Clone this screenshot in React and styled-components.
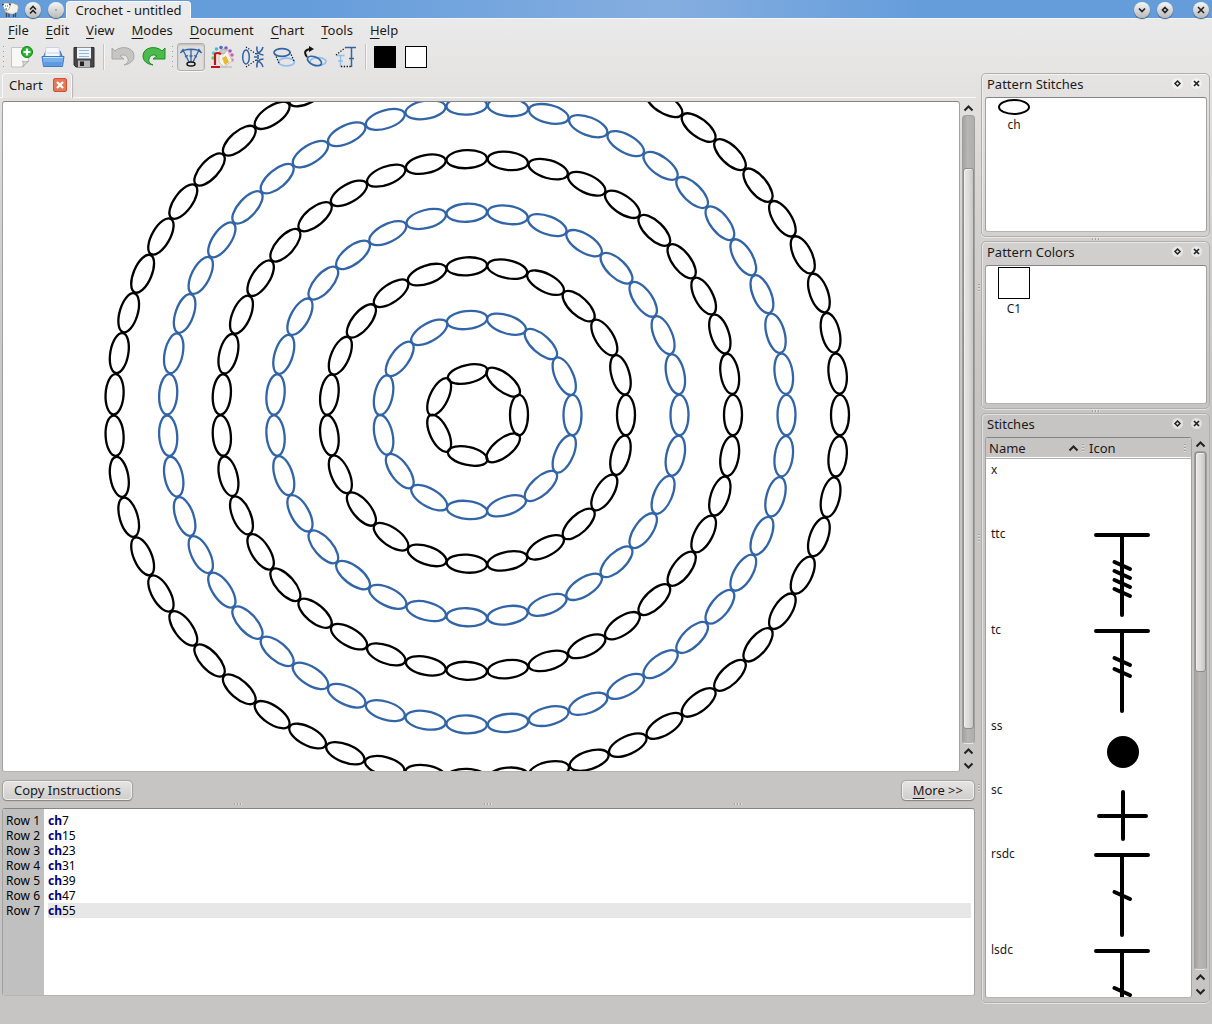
import React from "react";
import styled, { createGlobalStyle, css } from "styled-components";

const GlobalStyle = createGlobalStyle`
  * { box-sizing: border-box; }
  body {
    margin: 0;
    font-family: "Noto Sans", "Open Sans", sans-serif;
    font-size: 13px;
    line-height: 18px;
    color: #1c1a19;
  }
  button { font: inherit; color: inherit; border: 0; padding: 0; background: none; }
`;

const Window = styled.div`
  display: flex;
  flex-direction: column;
  height: 100vh;
  overflow: hidden;
  background: #c6c5c4 linear-gradient(#ebeaea 19px, #e2e1e0 100px, #d2d1d0 230px, #c6c5c4 400px);
`;

/* Title bar */
const TitleBar = styled.header`
  display: flex;
  align-items: center;
  flex: none;
  height: 19px;
  padding: 0 3px 0 2px;
  background: linear-gradient(90deg, #659ddb 25%, #85aee0 55%, #659ddb 76%);
  box-shadow: inset 0 -1px #f4f7fa;
`;

const TitleTab = styled.h1`
  align-self: flex-end;
  margin: 0 auto 0 2px;
  height: 18px;
  width: 125px;
  text-align: center;
  font-size: 13px;
  font-weight: 400;
  line-height: 16px;
  background: #ebebeb;
  border: 1px solid #fafafa;
  border-bottom: 0;
  border-radius: 4px 4px 0 0;
`;

const RoundButton = styled.button`
  width: 16px;
  height: 16px;
  flex: none;
  margin-left: ${(p) => p.$gap || 0}px;
  border-radius: 50%;
  background: linear-gradient(#f6f6f6, #b9b9b9);
  box-shadow: 0 1px 1px #35567e;
  svg { display: block; }
`;

/* Menus and tool bar */
const MenuBar = styled.nav`
  display: flex;
  flex: none;
  gap: 1px;
  height: 22px;
  padding-top: 2px;
  align-items: flex-start;
`;

const MenuButton = styled.button`
  padding: 0 8px;
`;

const Mnemonic = styled.u`
  text-underline-offset: 3px;
`;

const ToolBar = styled.div`
  display: flex;
  flex: none;
  align-items: center;
  gap: 3px;
  height: 31px;
  padding-left: 2px;
`;

const Handle = styled.i`
  width: 4px;
  height: 26px;
  margin-right: -1px;
  background: radial-gradient(circle, #9b9a99 1px, transparent 1px) 0 0 / 3px 5px;
`;

const Separator = styled.i`
  width: 5px;
  height: 26px;
  background: linear-gradient(90deg, transparent 2px, #c4c3c2 2px 3px, #f6f6f6 3px 4px, transparent 4px);
`;

const ToolButton = styled.button`
  display: grid;
  place-items: center;
  width: 28px;
  height: 28px;
  border-radius: 3px;
  ${(p) =>
    p.$pressed &&
    css`
      background: #dfdedd;
      border: 1px solid #b0afae;
      box-shadow: inset 0 1px 2px #b8b7b6, 0 1px #f8f8f8;
    `}
`;

const Swatch = styled.span`
  width: 22px;
  height: 22px;
  border: 1px solid #000;
  background: ${(p) => p.$color};
`;

/* Work area */
const Body = styled.div`
  display: flex;
  flex: 1;
  min-height: 0;
  padding: 0 2px 21px 0;
`;

const Left = styled.main`
  display: flex;
  flex-direction: column;
  flex: 1;
  min-width: 0;
  padding-bottom: 7px;
`;

const Tabs = styled.div`
  display: flex;
  align-items: flex-end;
  flex: none;
  height: 26px;
  padding-left: 2px;
  border-bottom: 1px solid #fafafa;
`;

const Tab = styled.div`
  display: flex;
  align-items: center;
  gap: 10px;
  height: 25px;
  margin-bottom: -1px;
  padding: 0 4px 2px 6px;
  border: 1px solid #f8f8f8;
  border-bottom: 0;
  border-radius: 4px 4px 0 0;
  background: #e6e5e4;
  box-shadow: 1px 0 1px #b5b4b3;
`;

const CloseTab = styled.button`
  width: 14px;
  height: 14px;
  border: 1px solid #d5502f;
  border-radius: 2px;
  background: #e3795a;
  svg { display: block; }
`;

const ScrollPane = styled.div`
  display: flex;
  flex: 1;
  min-height: 0;
  gap: 2px;
  padding: ${(p) => p.$pad || "0"};
`;

const Frame = styled.div`
  flex: 1;
  min-width: 0;
  min-height: 0;
  overflow: hidden;
  background: #fff;
  border: 1px solid #a3a2a1;
  border-top-color: #858483;
  border-bottom-color: #b5b4b3;
  border-radius: 3px;
`;

const Canvas = styled.svg`
  display: block;
  width: 100%;
  height: 100%;
`;

const Bar = styled.div`
  display: flex;
  flex-direction: column;
  width: 13px;
  flex: none;
`;

const ArrowButton = styled.button`
  height: 14px;
  svg { display: block; }
`;

const Groove = styled.div`
  display: flex;
  flex-direction: column;
  flex: 1;
  min-height: 0;
  border: 1px solid #a09f9e;
  border-bottom-color: #e8e7e6;
  border-radius: 4px;
  background: linear-gradient(90deg, #a3a2a1, #b7b6b5 40%, #afaead);
`;

const Space = styled.i`
  flex: ${(p) => p.$grow};
`;

const Thumb = styled.div`
  flex: ${(p) => p.$grow};
  border: 1px solid #8e8d8c;
  border-radius: 3px;
  background: linear-gradient(90deg, #e6e5e4, #dddcdb 50%, #c6c5c4);
  box-shadow: inset 1px 1px #f0f0f0;
`;

const ButtonRow = styled.div`
  display: flex;
  justify-content: space-between;
  flex: none;
  padding: 9px 2px 0 3px;
`;

const PushButton = styled.button`
  height: 19px;
  padding: 0 10px;
  line-height: 17px;
  border: 1px solid #f0efee;
  border-radius: 4px;
  background: linear-gradient(#e5e4e3, #cfcecd);
  box-shadow: 0 1px 1px #888786, 0 0 1px 1px #a5a4a3;
`;

const Grips = styled.div`
  display: flex;
  flex: none;
  flex-direction: ${(p) => (p.$vertical ? "column" : "row")};
  align-items: center;
  justify-content: center;
  gap: 242px;
  ${(p) => (p.$vertical ? "width" : "height")}: ${(p) => p.$size}px;
`;

const Grip = styled.i`
  width: ${(p) => (p.$vertical ? 2 : 8)}px;
  height: ${(p) => (p.$vertical ? 8 : 2)}px;
  background: repeating-linear-gradient(
    ${(p) => (p.$vertical ? "180deg" : "90deg")},
    #a3a2a1 0 1px, #e0dfde 1px 2px, transparent 2px 3px
  );
`;

const Editor = styled.div`
  display: flex;
  flex: none;
  height: 188px;
  margin: 0 1px 0 2px;
  overflow: hidden;
  background: #fff;
  border: 1px solid #a3a2a1;
  border-top-color: #858483;
  border-bottom-color: #b5b4b3;
  border-radius: 3px;
  font-size: 12px;
  line-height: 15px;
  color: #000;
`;

const Gutter = styled.div`
  flex: none;
  width: 41px;
  padding: 4px 4px 0 0;
  text-align: right;
  white-space: nowrap;
  background: #c0c0c0;
`;

const Lines = styled.div`
  flex: 1;
  padding: 4px 3px 0 4px;
  outline: 0;
`;

const Line = styled.div`
  background: ${(p) => (p.$current ? "#e7e7e7" : "none")};
  b { color: #000080; }
`;

/* Docks */
const Docks = styled.aside`
  display: flex;
  flex-direction: column;
  flex: none;
  width: 229px;
  padding-top: 1px;
`;

const Dock = styled.section`
  display: flex;
  flex-direction: column;
  flex: ${(p) => p.$flex};
  min-height: 0;
  padding: 0 2px 4px 3px;
  border: 1px solid #b0afae;
  border-radius: 5px;
  box-shadow: inset 1px 1px rgba(255, 255, 255, 0.5), 0 1px rgba(255, 255, 255, 0.5);
`;

const DockHeader = styled.div`
  display: flex;
  align-items: center;
  flex: none;
  height: 23px;
  padding: 0 5px 4px 2px;
`;

const DockTitle = styled.h2`
  margin: 0 auto 0 0;
  font-size: 13px;
  font-weight: 400;
  line-height: 16px;
`;

const DockButton = styled.button`
  width: 11px;
  height: 11px;
  margin-left: 8px;
  border-radius: 50%;
  background: rgba(255, 255, 255, 0.5);
  svg { display: block; }
`;

const Item = styled.figure`
  display: flex;
  flex-direction: column;
  align-items: center;
  width: 32px;
  margin: 1px 0 0 12px;
  font-size: 12px;
  line-height: 19px;
`;

const ColorBox = styled.span`
  width: 32px;
  height: 32px;
  border: 1px solid #000;
  background: #fff;
`;

const Table = styled.table`
  width: 100%;
  border-collapse: collapse;
  table-layout: fixed;
  td, th { padding: 0; text-align: left; vertical-align: top; font-weight: 400; }
  th { background: #c6c5c4; height: 21px; padding-top: 1px; box-shadow: inset 0 -1px #b0afae, inset 0 -2px #fff; }
  th:first-child { width: 98px; }
  td:first-child { padding: 2px 0 0 5px; font-size: 12px; }
`;

const HeadCell = styled.div`
  display: flex;
  align-items: center;
  justify-content: space-between;
  padding: 0 ${(p) => (p.$sorted ? 0 : 5)}px 0 ${(p) => (p.$sorted ? 3 : 5)}px;
`;

const HeadEnd = styled.span`
  display: flex;
  align-items: center;
  gap: 2px;
`;

const StitchRow = styled.tr`
  height: ${(p) => p.$height}px;
  svg { display: block; }
`;

/* Drawings */
const stroke = { fill: "none", stroke: "#222", strokeWidth: 2 };

const Chevron = ({ up }) => (
  <svg width="13" height="14" {...stroke}>
    <path d={up ? "M2.500 9.500L6.500 5.500L10.500 9.500" : "M2.500 5.500L6.500 9.500L10.500 5.500"} />
  </svg>
);

const WindowGlyph = ({ d, width = 2 }) => (
  <svg width="16" height="16" {...stroke} strokeWidth={width}>
    <path d={d} />
  </svg>
);

const Sheep = () => (
  <svg width="17" height="17" viewBox="0 0 17 17">
    <path d="M4.500 11v5M7 11v5M11.500 11v5M13.500 11v5" stroke="#444" strokeWidth="1.300" />
    <path d="M3 6C3 4 5 3 7 4c1-2 4-3 6-1 3 0 4 3 3 5 0 3-1 4-3 4-2 2-5 1-7 0-3 0-4-3-3-6z" fill="#f3f1ec" stroke="#8e8c86" strokeWidth=".7" />
    <path d="M1 2h6l1 3-1 3-2 2-3-2-1-3z" fill="#fff" stroke="#888" strokeWidth=".6" />
    <path d="M0 4l2-1M7 3l2 1M3 5h.8M5 5h.8M3.500 8h1.500" stroke="#222" strokeWidth="1" />
  </svg>
);

const NewIcon = () => (
  <svg width="24" height="24" viewBox="0 0 24 24">
    <path d="M1.500 2.500h17V16l-6 6h-11z" fill="#f8f8f8" stroke="#c4c4c4" />
    <path d="M18.500 16l-6 6c1-2 1-4 0-6 2 1 4 1 6 0z" fill="#ddd" stroke="#999" strokeWidth=".7" />
    <circle cx="17" cy="7" r="5.500" fill="#2bb533" stroke="#0a8a10" />
    <path d="M17 3.500v7M13.500 7h7" stroke="#fff" strokeWidth="2.200" />
  </svg>
);

const OpenIcon = () => (
  <svg width="24" height="24" viewBox="0 0 24 24">
    <path d="M2 13L5 6h14l3 7z" fill="#4b87d4" stroke="#3c76bd" />
    <path d="M5 2.500h13l1 9H4z" fill="#f4f7fb" stroke="#b8c8dc" strokeWidth=".7" />
    <path d="M6 8h12" stroke="#c5d4e6" />
    <path d="M1 11.500h22l-1.500 10h-19z" fill="#79afea" stroke="#3d79c4" />
    <path d="M2 12.500h20" stroke="#c9e0fa" />
    <path d="M3 17h18l-1 4H3.500z" fill="#5e9ae2" />
  </svg>
);

const SaveIcon = () => (
  <svg width="24" height="24" viewBox="0 0 24 24">
    <path d="M2 2.500h20v19.500H4l-2-2z" fill="#47474a" stroke="#2c2c2e" />
    <path d="M5 2.500h14v11H5z" fill="#f0f5fa" />
    <path d="M7 5.500h10M7 8.500h10M7 11.500h10" stroke="#8fb6dc" />
    <path d="M6 15.500h12V22H6z" fill="#b8b8b8" />
    <path d="M8 16.500h4V21H8z" fill="#222" />
  </svg>
);

const ArrowIcon = ({ fill, edge, flip }) => (
  <svg width="24" height="24" viewBox="0 0 24 24">
    <path
      transform={flip ? "matrix(-1 0 0 1 24 0)" : undefined}
      d="M1 3l3 3c6-6 19-4 19 5 0 5-4 8-10 9 3-1 5-4 4-6-1-4-5-5-8-3l4 3H1z"
      fill={fill} stroke={edge} strokeLinejoin="round"
    />
  </svg>
);

const blue = "#3264a8";
const paleBlue = "#93bff0";

const StitchModeIcon = () => (
  <svg width="24" height="24" viewBox="0 0 24 24" fill="none" stroke={blue} strokeWidth="1.300">
    <path d="M1.500 8C5 3 19 3 22.500 8M1.500 8l3-4M22.500 8l-3-4M4.500 6L10 17M19.500 6L14 17M12 5v12M6 12l3-1.500M18 12l-3-1.500M10.500 11h3" />
    <ellipse cx="12" cy="19" rx="4" ry="2" stroke="#111" strokeWidth="1.500" />
  </svg>
);

const FillIcon = () => (
  <svg width="24" height="24" viewBox="0 0 24 24">
    <circle cx="3" cy="13" r="1.800" fill="#5bd65f" />
    <circle cx="3.500" cy="8" r="1.800" fill="#4ad6b0" />
    <circle cx="6.500" cy="4" r="1.800" fill="#4ab4da" />
    <circle cx="11" cy="2.500" r="1.800" fill="#4f68cc" />
    <circle cx="16" cy="3" r="1.800" fill="#7d55cc" />
    <circle cx="20" cy="6" r="1.800" fill="#a24fc8" />
    <circle cx="22" cy="10" r="1.800" fill="#c65fbc" />
    <circle cx="22" cy="15" r="1.800" fill="#e0809c" />
    <path d="M9 9l8-5 5 12-8 6-5-5z" fill="#f6f3ea" stroke="#c3bba9" strokeWidth=".8" />
    <path d="M9 9c0-3 2-5 5-5l3 1-3 4z" fill="#cfccc6" stroke="#999" strokeWidth=".6" />
    <path d="M12 13l4-2 3 6-4 3z" fill="#e9b82f" />
    <path d="M1 22h9" stroke="#c4141b" strokeWidth="2" />
    <path d="M5 20V9c2-2 4-1 6 0" fill="none" stroke="#c4141b" strokeWidth="2.200" />
    <path d="M10 22h12" stroke="#b0afae" />
  </svg>
);

const MirrorIcon = () => (
  <svg width="24" height="24" viewBox="0 0 24 24" fill="none" stroke={blue} strokeWidth="1.500">
    <ellipse cx="5" cy="12" rx="3.300" ry="7" />
    <path d="M16 1.500C15 7 18 10 22.500 10M16 22.500C15 17 18 14 22.500 14M22 2c-1 4-4 6-7 7M22 22c-1-4-4-6-7-7M13 12h5" />
    <path d="M5 2l13 9M5 22l13-9" stroke="#111" strokeWidth="1.200" strokeDasharray="1.200 1.600" />
  </svg>
);

const CopyIcon = () => (
  <svg width="24" height="24" viewBox="0 0 24 24" fill="none" strokeWidth="1.700">
    <ellipse cx="14.500" cy="17" rx="8" ry="3.800" stroke={paleBlue} />
    <path d="M3 9l4 9M18 7l4 9" stroke="#111" strokeWidth="1.300" strokeDasharray="1.300 1.500" />
    <ellipse cx="10" cy="7.500" rx="8" ry="3.800" stroke={blue} />
  </svg>
);

const RotateIcon = () => (
  <svg width="24" height="24" viewBox="0 0 24 24" fill="none" strokeWidth="1.700">
    <ellipse cx="15" cy="16.500" rx="8" ry="3.800" stroke={paleBlue} />
    <ellipse cx="11.500" cy="16" rx="7.500" ry="4" transform="rotate(24 11.500 16)" stroke={blue} />
    <path d="M4 12C0 7 3 4 8 4" stroke="#111" strokeWidth="2" />
    <path d="M6 1l5 3-5 3z" fill="#111" />
  </svg>
);

const AngleIcon = () => (
  <svg width="24" height="24" viewBox="0 0 24 24" fill="none" strokeWidth="1.500">
    <path d="M11 2.500h11M17.500 2.500V22M15 13.500h5" stroke={blue} />
    <path d="M2.500 10.500h8M6.500 10.500V22M4 16h5" stroke={paleBlue} />
    <path d="M2 10l9-7M7 21.500h10" stroke="#111" strokeWidth="1.300" strokeDasharray="1.300 1.500" />
  </svg>
);

const SmallChain = () => (
  <svg width="32" height="16" role="img" aria-label="Chain stitch">
    <ellipse cx="16" cy="8" rx="15" ry="7" fill="none" stroke="#000" strokeWidth="2" />
  </svg>
);

const Post = ({ marks }) => (
  <svg width="80" height="96" stroke="#000" strokeWidth="4" strokeLinecap="round" fill="none">
    <path d="M12 12H64M38 12V92" />
    {marks.map((y) => (
      <path key={y} d={`M30.500 ${y - 3}L46 ${y + 4}`} />
    ))}
  </svg>
);

const SlipStitch = () => (
  <svg width="80" height="64"><circle cx="39" cy="37" r="16" /></svg>
);

const SingleCrochet = () => (
  <svg width="80" height="64" stroke="#000" strokeWidth="4" strokeLinecap="round">
    <path d="M15 37H62M39 13V60" />
  </svg>
);

const stitches = [
  { name: "x", height: 64 },
  { name: "ttc", height: 96, icon: <Post marks={[42, 51, 60, 69]} /> },
  { name: "tc", height: 96, icon: <Post marks={[42, 53]} /> },
  { name: "ss", height: 64, icon: <SlipStitch /> },
  { name: "sc", height: 64, icon: <SingleCrochet /> },
  { name: "rsdc", height: 96, icon: <Post marks={[52]} /> },
  { name: "lsdc", height: 96, icon: <Post marks={[52]} /> },
];

const rounds = [7, 15, 23, 31, 39, 47, 55];
const menus = ["File", "Edit", "View", "Modes", "Document", "Chart", "Tools", "Help"];

const ChartDrawing = () => (
  <Canvas viewBox="0 0 956 669" preserveAspectRatio="xMidYMid slice" role="img" aria-label="Crochet chart">
    {rounds.map((count, i) => (
      <g key={count} fill="none" stroke={i % 2 ? blue : "#000"} strokeWidth="2.300" transform="translate(474 313)">
        {Array.from({ length: count }, (_, n) => (
          <ellipse key={n} cx={42 + i * 53.5} cy="0" rx="9" ry="20.200" transform={`rotate(${(n * 360) / count})`} />
        ))}
      </g>
    ))}
  </Canvas>
);

const ScrollBar = ({ before, thumb, after }) => (
  <Bar>
    <ArrowButton aria-label="Scroll up"><Chevron up /></ArrowButton>
    <Groove>
      <Space $grow={before} />
      <Thumb $grow={thumb} />
      <Space $grow={after} />
    </Groove>
    <ArrowButton aria-label="Page up"><Chevron up /></ArrowButton>
    <ArrowButton aria-label="Scroll down"><Chevron /></ArrowButton>
  </Bar>
);

const DockPanel = ({ title, flex, children }) => (
  <Dock $flex={flex}>
    <DockHeader>
      <DockTitle>{title}</DockTitle>
      <DockButton aria-label={`Float ${title}`}>
        <svg width="11" height="11" {...stroke} strokeWidth="1.500"><path d="M5.500 3L8 5.500L5.500 8L3 5.500Z" /></svg>
      </DockButton>
      <DockButton aria-label={`Close ${title}`}>
        <svg width="11" height="11" {...stroke} strokeWidth="1.700"><path d="M3 3L8 8M8 3L3 8" /></svg>
      </DockButton>
    </DockHeader>
    {children}
  </Dock>
);

const Label = ({ children }) => (
  <>
    <Mnemonic>{children[0]}</Mnemonic>
    {children.slice(1)}
  </>
);

export default function App() {
  return (
    <Window>
      <GlobalStyle />
      <TitleBar>
        <Sheep />
        <RoundButton $gap={6} aria-label="Shade"><WindowGlyph width={1.6} d="M5 7.500L8 4.500L11 7.500M5 11.500L8 8.500L11 11.500" /></RoundButton>
        <RoundButton $gap={7} aria-label="All desktops"><WindowGlyph d="M7.500 8H8.500" width={1} /></RoundButton>
        <TitleTab>Crochet - untitled</TitleTab>
        <RoundButton aria-label="Minimize"><WindowGlyph d="M5 6.500L8 9.500L11 6.500" width={1.7} /></RoundButton>
        <RoundButton $gap={7} aria-label="Maximize"><WindowGlyph d="M8 5.500L10.500 8L8 10.500L5.500 8Z" width={1.7} /></RoundButton>
        <RoundButton $gap={20} aria-label="Close"><WindowGlyph d="M5 5L11 11M11 5L5 11" width={1.6} /></RoundButton>
      </TitleBar>
      <MenuBar>
        {menus.map((m) => <MenuButton key={m}><Label>{m}</Label></MenuButton>)}
      </MenuBar>
      <ToolBar>
        <Handle />
        <ToolButton aria-label="New"><NewIcon /></ToolButton>
        <ToolButton aria-label="Open"><OpenIcon /></ToolButton>
        <ToolButton aria-label="Save"><SaveIcon /></ToolButton>
        <Separator />
        <ToolButton aria-label="Undo"><ArrowIcon fill="#c6c5c4" edge="#a8a7a6" /></ToolButton>
        <ToolButton aria-label="Redo"><ArrowIcon fill="#4cba4c" edge="#1c8c20" flip /></ToolButton>
        <Handle />
        <ToolButton $pressed aria-label="Stitch mode"><StitchModeIcon /></ToolButton>
        <ToolButton aria-label="Color mode"><FillIcon /></ToolButton>
        <ToolButton aria-label="Mirror"><MirrorIcon /></ToolButton>
        <ToolButton aria-label="Copy"><CopyIcon /></ToolButton>
        <ToolButton aria-label="Rotate"><RotateIcon /></ToolButton>
        <ToolButton aria-label="Angle"><AngleIcon /></ToolButton>
        <Separator />
        <ToolButton aria-label="Foreground color"><Swatch $color="#000" /></ToolButton>
        <ToolButton aria-label="Background color"><Swatch $color="#fff" /></ToolButton>
      </ToolBar>
      <Body>
        <Left>
          <Tabs>
            <Tab>
              Chart
              <CloseTab aria-label="Close tab">
                <svg width="12" height="12" fill="none" stroke="#fff" strokeWidth="2.200"><path d="M3 3L9 9M9 3L3 9" /></svg>
              </CloseTab>
            </Tab>
          </Tabs>
          <ScrollPane $pad="3px 1px 0 2px">
            <Frame><ChartDrawing /></Frame>
            <ScrollBar before={52} thumb={561} after={14} />
          </ScrollPane>
          <ButtonRow>
            <PushButton>Copy Instructions</PushButton>
            <PushButton><Label>{"More >>"}</Label></PushButton>
          </ButtonRow>
          <Grips $size={8}><Grip /><Grip /><Grip /></Grips>
          <Editor>
            <Gutter>
              {rounds.map((count, i) => <div key={count}>Row {i + 1}</div>)}
            </Gutter>
            <Lines role="textbox" aria-label="Instructions" aria-multiline="true" contentEditable suppressContentEditableWarning spellCheck={false}>
              {rounds.map((count, i) => (
                <Line key={count} $current={i === rounds.length - 1}><b>ch</b>{count}</Line>
              ))}
            </Lines>
          </Editor>
        </Left>
        <Grips $vertical $size={5}><Grip $vertical /><Grip $vertical /><Grip $vertical /></Grips>
        <Docks>
          <DockPanel title="Pattern Stitches" flex="0 1 164px">
            <Frame><Item><SmallChain /><figcaption>ch</figcaption></Item></Frame>
          </DockPanel>
          <Grips $size={4}><Grip /></Grips>
          <DockPanel title="Pattern Colors" flex="0 1 168px">
            <Frame><Item><ColorBox /><figcaption>C1</figcaption></Item></Frame>
          </DockPanel>
          <Grips $size={4}><Grip /></Grips>
          <DockPanel title="Stitches" flex="1">
            <ScrollPane>
              <Frame>
                <Table>
                  <thead>
                    <tr>
                      <th><HeadCell $sorted>Name<HeadEnd><Chevron up /><Grip $vertical /></HeadEnd></HeadCell></th>
                      <th><HeadCell>Icon<Grip $vertical /></HeadCell></th>
                    </tr>
                  </thead>
                  <tbody>
                    {stitches.map((s) => (
                      <StitchRow key={s.name} $height={s.height}><td>{s.name}</td><td>{s.icon}</td></StitchRow>
                    ))}
                  </tbody>
                </Table>
              </Frame>
              <ScrollBar before={0} thumb={219} after={299} />
            </ScrollPane>
          </DockPanel>
        </Docks>
      </Body>
    </Window>
  );
}
